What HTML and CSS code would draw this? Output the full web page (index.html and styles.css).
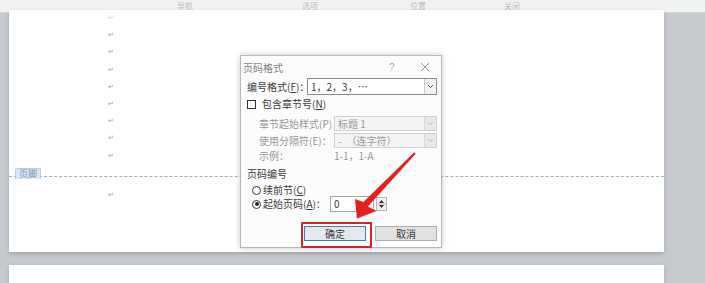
FILE: index.html
```html
<!DOCTYPE html>
<html lang="zh-CN">
<head>
    <meta charset="UTF-8">
    <meta name="viewport" content="width=device-width, initial-scale=1.0">
    <title>页码格式</title>
    <link rel="stylesheet" href="styles.css">
</head>
<body>

<div class="ribbon">
    <span class="ribbon-tab">导航</span>
    <span class="ribbon-tab">选项</span>
    <span class="ribbon-tab">位置</span>
    <span class="ribbon-tab">关闭</span>
</div>

<div class="workspace">
    <div class="page">
        <div class="page-lines">
            <p class="mark faint">↵</p>
            <p class="mark">↵</p>
            <p class="mark">↵</p>
            <p class="mark">↵</p>
            <p class="mark">↵</p>
            <p class="mark">↵</p>
            <p class="mark">↵</p>
            <p class="mark">↵</p>
            <p class="mark">↵</p>
        </div>
        <div class="footer-bar">
            <span class="footer-tag">页脚</span>
        </div>
        <div class="footer-lines">
            <p class="mark">↵</p>
        </div>
    </div>
    <div class="page next-page"></div>
</div>

<div class="dialog">
    <div class="dialog-title">
        <span class="title-text">页码格式</span>
        <span class="title-help">?</span>
        <svg class="title-close" width="10" height="10" viewBox="0 0 10 10">
            <path d="M1 1 L9 9 M9 1 L1 9" stroke="#9a9a9a" stroke-width="1" fill="none"/>
        </svg>
    </div>

    <div class="dialog-body">
        <div class="row format-row">
            <label class="label wide">编号格式(<u>F</u>)：</label>
            <div class="select">
                <span class="select-value">1，2，3，…</span>
                <span class="select-btn">
                    <svg width="7" height="5" viewBox="0 0 7 5"><path d="M1 1 L3.5 3.5 L6 1" stroke="#555" fill="none"/></svg>
                </span>
            </div>
        </div>

        <div class="row check-row">
            <span class="checkbox"></span>
            <span class="label">包含章节号(<u>N</u>)</span>
        </div>

        <div class="row sub-row first-sub">
            <span class="label sub-label disabled">章节起始样式(P)</span>
            <div class="select small disabled-select">
                <span class="select-value">标题 1</span>
                <span class="select-btn">
                    <svg width="7" height="5" viewBox="0 0 7 5"><path d="M1 1 L3.5 3.5 L6 1" stroke="#bbb" fill="none"/></svg>
                </span>
            </div>
        </div>

        <div class="row sub-row">
            <span class="label sub-label disabled">使用分隔符(E)：</span>
            <div class="select small disabled-select">
                <span class="select-value">-　（连字符）</span>
                <span class="select-btn">
                    <svg width="7" height="5" viewBox="0 0 7 5"><path d="M1 1 L3.5 3.5 L6 1" stroke="#bbb" fill="none"/></svg>
                </span>
            </div>
        </div>

        <div class="row sample-row">
            <span class="label sub-label disabled">示例：</span>
            <span class="disabled sample-value">1-1，1-A</span>
        </div>

        <div class="row group-title">
            <span class="label">页码编号</span>
        </div>

        <div class="row radio-row">
            <span class="radio"></span>
            <span class="label">续前节(<u>C</u>)</span>
        </div>

        <div class="row radio-row start-row">
            <span class="radio checked"></span>
            <span class="label">起始页码(<u>A</u>)：</span>
            <span class="num-input">0</span>
            <span class="spin">
                <svg width="9" height="12" viewBox="0 0 9 12">
                    <path d="M2 5 L4.5 2 L7 5 Z M2 7 L4.5 10 L7 7 Z" fill="#333"/>
                    <path d="M0 6 H9" stroke="#bbb" stroke-width="1"/>
                </svg>
            </span>
        </div>

        <div class="row button-row">
            <span class="btn ok-btn">确定</span>
            <span class="btn">取消</span>
        </div>
    </div>
</div>

<svg class="arrow" width="705" height="283" viewBox="0 0 705 283">
    <polygon points="414.3,152.3 363.5,202 355,199 357,218.5 376.5,211 368,206.5 415.7,153.7" fill="#e41f1c"/>
</svg>

</body>
</html>
```

FILE: styles.css
```css
body {
    margin: 0;
    width: 705px;
    height: 283px;
    overflow: hidden;
    background: #c6c9cd;
    font-family: "Noto Sans CJK SC", "Noto Sans", sans-serif;
    font-size: 10px;
    color: #3a3a3a;
    position: relative;
}

.ribbon {
    height: 12px;
    background: #f1f3f1;
    border-bottom: 1px solid #d3dbd4;
    display: flex;
    align-items: center;
    padding-left: 177px;
}
.ribbon-tab {
    color: #b9bcb9;
    font-size: 8px;
    line-height: 10px;
}
.ribbon-tab:nth-child(1) { width: 125px; }
.ribbon-tab:nth-child(2) { width: 108px; }
.ribbon-tab:nth-child(3) { width: 94px; }

.workspace {
    padding-left: 9px;
}
.page {
    width: 655px;
    height: 242px;
    background: #fff;
    box-shadow: 0 2px 4px rgba(0, 0, 0, 0.18);
}
.next-page {
    height: 20px;
    margin-top: 13px;
}

.page-lines {
    margin-top: -3px;
    padding-left: 99px;
}
.mark {
    margin: 0;
    height: 17.2px;
    line-height: 17.2px;
    font-family: "DejaVu Sans", sans-serif;
    font-size: 7px;
    color: #9c9c9c;
}
.mark.faint {
    color: #d4d4d4;
}

.footer-bar {
    height: 11px;
    border-bottom: 1px dashed #a3aeb6;
    padding-left: 6px;
}
.footer-tag {
    display: inline-block;
    width: 26px;
    height: 11px;
    box-sizing: border-box;
    background: #dbe6f2;
    border: 1px solid #bccde0;
    border-bottom: none;
    border-radius: 2px 2px 0 0;
    color: #7593b6;
    font-size: 9px;
    line-height: 10px;
    text-align: center;
}
.footer-lines {
    margin-top: 10px;
    padding-left: 99px;
}

/* 对话框 */
.dialog {
    position: absolute;
    left: 240px;
    top: 55px;
    width: 202px;
    height: 193px;
    box-sizing: border-box;
    background: #fcfcfc;
    border: 1px solid #b7b7b7;
    box-shadow: 0 0 6px rgba(0, 0, 0, 0.22);
}
.dialog-title {
    height: 22px;
    display: flex;
    align-items: center;
}
.title-text {
    padding-left: 2px;
    color: #7c7c7c;
    font-size: 10px;
    width: 146px;
}
.title-help {
    color: #a8a8a8;
    font-family: "Liberation Sans", sans-serif;
    font-size: 10px;
    width: 31px;
}
.title-close {
    display: block;
}

.dialog-body {
    padding: 0 4px 0 6px;
}
.row {
    display: flex;
    align-items: center;
}
.label {
    white-space: nowrap;
    line-height: 12px;
}
.wide {
    width: 60px;
}
.disabled {
    color: #959595;
}

.select {
    flex: 1;
    height: 17px;
    box-sizing: border-box;
    border: 1px solid #8d8d8d;
    background: #fff;
    display: flex;
    align-items: center;
    justify-content: space-between;
}
.select-value {
    padding-left: 3px;
    line-height: 12px;
}
.select-btn {
    width: 12px;
    height: 100%;
    box-sizing: border-box;
    border-left: 1px solid #c8c8c8;
    background: #f2f2f2;
    display: flex;
    align-items: center;
    justify-content: center;
}
.select.small {
    height: 15px;
}
.disabled-select {
    border-color: #cfcfcf;
    background: #f4f4f4;
    color: #9a9a9a;
}
.disabled-select .select-btn {
    background: #e8e8e8;
    border-left-color: #dadada;
}

.check-row {
    margin-top: 4px;
    height: 10px;
}
.checkbox {
    width: 9px;
    height: 9px;
    box-sizing: border-box;
    border: 1px solid #333;
    background: #fff;
    margin-right: 6px;
}

.sub-row {
    margin-top: 2px;
    padding-left: 12px;
}
.first-sub {
    margin-top: 7px;
}
.sub-label {
    width: 75px;
}
.sample-row {
    margin-top: 2px;
    padding-left: 12px;
    height: 12px;
}
.sample-value {
    line-height: 12px;
}

.group-title {
    margin-top: 6px;
    height: 12px;
}

.radio-row {
    margin-top: 4px;
    padding-left: 5px;
    height: 12px;
}
.start-row {
    margin-top: 0;
    height: 16px;
}
.radio {
    width: 9px;
    height: 9px;
    box-sizing: border-box;
    border: 1px solid #333;
    border-radius: 50%;
    background: #fff;
    margin-right: 2px;
    display: flex;
    align-items: center;
    justify-content: center;
}
.radio.checked::after {
    content: "";
    width: 4px;
    height: 4px;
    border-radius: 50%;
    background: #222;
}
.num-input {
    margin-left: 4px;
    width: 44px;
    height: 16px;
    box-sizing: border-box;
    border: 1px solid #a8a8a8;
    background: #fff;
    padding-left: 3px;
    line-height: 14px;
}
.spin {
    margin-left: 2px;
    width: 11px;
    height: 14px;
    box-sizing: border-box;
    border: 1px solid #b5b5b5;
    background: #f0f0f0;
    display: flex;
    align-items: center;
    justify-content: center;
}

.button-row {
    margin-top: 14px;
    justify-content: flex-end;
    gap: 9px;
}
.btn {
    width: 62px;
    height: 15px;
    box-sizing: border-box;
    border: 1px solid #adadad;
    background: #e1e1e1;
    text-align: center;
    line-height: 13px;
    position: relative;
}
.ok-btn {
    border-color: #3f7bbd;
    background: #e5e8ec;
}
.ok-btn::after {
    content: "";
    position: absolute;
    left: -4px;
    top: -5px;
    right: -7px;
    bottom: -8px;
    border: 2px solid #d8231f;
    border-radius: 1px;
}

.arrow {
    position: absolute;
    left: 0;
    top: 0;
    pointer-events: none;
}
```
